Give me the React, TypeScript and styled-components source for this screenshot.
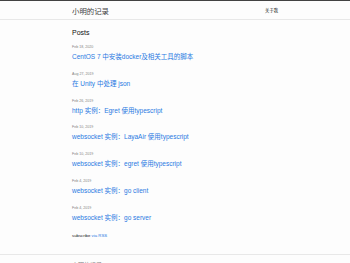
import React from "react";
import styled, { createGlobalStyle } from "styled-components";

const Global = createGlobalStyle`
  html, body { margin: 0; padding: 0; background: #fdfdfd; }
  body {
    font-family: "Liberation Sans", "Noto Sans CJK SC", sans-serif;
    color: #111;
    -webkit-font-smoothing: antialiased;
  }
  * { box-sizing: border-box; }
`;

const Header = styled.header`
  border-top: 1px solid #424242;
  border-bottom: 1px solid #e8e8e8;
`;

const Wrapper = styled.div`
  width: 206px;
  margin: 0 auto;
`;

const HeaderInner = styled(Wrapper)`
  display: flex;
  align-items: center;
  justify-content: space-between;
  height: 18px;
`;

const SiteTitle = styled.a`
  font-size: 7.4px;
  color: #424242;
  text-decoration: none;
  font-weight: 400;
`;

const NavLink = styled.a`
  font-size: 4.3px;
  color: #111;
  text-decoration: none;
`;

const Main = styled.main`
  padding-top: 8px;
  padding-bottom: 15px;
`;

const PageHeading = styled.h1`
  font-size: 7px;
  font-weight: 400;
  margin: 0 0 5px;
  line-height: 10px;
  color: #111;
`;

const PostList = styled.ul`
  list-style: none;
  margin: 0;
  padding: 0;
  display: flex;
  flex-direction: column;
  gap: 6.8px;
`;

const Post = styled.li`
  display: flex;
  flex-direction: column;
`;

const PostMeta = styled.span`
  font-size: 3.6px;
  color: #828282;
  line-height: 8px;
`;

const PostLink = styled.a`
  font-size: 6.5px;
  color: #2a7ae2;
  text-decoration: none;
  line-height: 12px;
`;

const Subscribe = styled.p`
  font-size: 4.3px;
  line-height: 6px;
  margin: 9px 0 0;
  color: #111;
`;

const RssLink = styled.a`
  color: #2a7ae2;
  text-decoration: none;
`;

const Footer = styled.footer`
  border-top: 1px solid #e8e8e8;
  padding-top: 6px;
`;

const FooterTitle = styled.div`
  font-size: 6px;
  line-height: 8px;
  color: #828282;
`;

const posts = [
  ["Feb 18, 2020", "CentOS 7 中安装docker及相关工具的脚本"],
  ["Aug 27, 2019", "在 Unity 中处理 json"],
  ["Feb 26, 2019", "http 实例：Egret 使用typescript"],
  ["Feb 10, 2019", "websocket 实例：LayaAir 使用typescript"],
  ["Feb 10, 2019", "websocket 实例：egret 使用typescript"],
  ["Feb 4, 2019", "websocket 实例：go client"],
  ["Feb 4, 2019", "websocket 实例：go server"],
];

export default function App() {
  return (
    <>
      <Global />
      <Header>
        <HeaderInner>
          <SiteTitle href="#">小明的记录</SiteTitle>
          <NavLink href="#">关于我</NavLink>
        </HeaderInner>
      </Header>
      <Main>
        <Wrapper>
          <PageHeading>Posts</PageHeading>
          <PostList>
            {posts.map(([d, t]) => (
              <Post key={t}>
                <PostMeta>{d}</PostMeta>
                <PostLink href="#">{t}</PostLink>
              </Post>
            ))}
          </PostList>
          <Subscribe>
            subscribe <RssLink href="#">via RSS</RssLink>
          </Subscribe>
        </Wrapper>
      </Main>
      <Footer>
        <Wrapper>
          <FooterTitle>小明的记录</FooterTitle>
        </Wrapper>
      </Footer>
    </>
  );
}
